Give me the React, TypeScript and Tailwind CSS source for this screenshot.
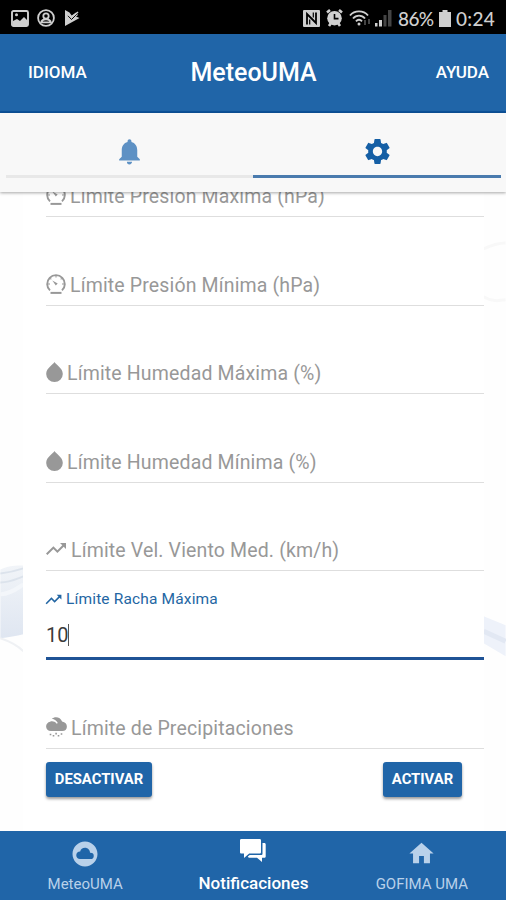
import type { ReactNode } from "react";
import { MdNotifications, MdSettings, MdTrendingUp, MdHome, MdCloudCircle } from "react-icons/md";

function GaugeIcon() {
  return (
    <svg viewBox="0 0 20 20" className="w-5 h-5 shrink-0" fill="none" stroke="currentColor" strokeWidth="1.900">
      <path d="M4 16.400A8.800 8.800 0 1 1 16 16.400" />
      <path d="M4.500 18.900h11" strokeWidth="2" />
      <path d="M1.500 10H4M16 10h2.500M10 1.500V3.600M4.300 4.400l1 1M15.700 4.400l-1 1" strokeWidth="1.100" />
      <path d="M6.300 6.500l5.400 3-1.900 2.100z" fill="currentColor" stroke="none" />
    </svg>
  );
}

function DropIcon() {
  return (
    <svg viewBox="0 0 17 20" className="w-[17px] h-5 shrink-0" fill="currentColor">
      <path d="M8.500 0C9.600 2.600 16.800 5.800 16.800 12A8.300 8 0 0 1 .2 12C.2 5.800 7.400 2.600 8.500 0z" />
    </svg>
  );
}

function RainIcon() {
  return (
    <svg viewBox="0 0 21 20" className="w-[21px] h-5 shrink-0" fill="currentColor">
      <path d="M5.800 1.700C8.400-.7 14.500-.6 16.100 4.600 19.200 5.100 20.900 7.300 20.900 9.700c0 2.600-2 4.400-4.500 4.400H4.900C2.100 14.100.1 12.100.1 9.500c0-2.400 1.700-4.400 4-4.800 1.700-.8 4.800-.5 6.600 2l1.100-.8C10.700 3.800 8.600 1.900 5.800 1.700z" />
      <path d="M3.700 16.700h1.600v1.600H3.700zM9.300 15.800h1.600v1.600H9.300zM14.700 16.200h1.600v1.600h-1.600zM6.700 18h1.600v1.600H6.700zM11.700 18h1.600v1.600h-1.600z" />
    </svg>
  );
}

function ChatIcon() {
  return (
    <svg viewBox="0 0 26 24" className="w-[26px] h-6" fill="currentColor">
      <path d="M1.300 0h18.400c.7 0 1.300.6 1.300 1.300v12c0 .7-.6 1.300-1.300 1.300H9.200L4 19v-4.400H1.300C.6 14.600 0 14 0 13.300v-12C0 .6.600 0 1.300 0z" />
      <path d="M22.500 4h1.900c.7 0 1.300.6 1.300 1.300v12.200c0 .7-.6 1.300-1.300 1.300H22V23l-5-4.200H9.200c-.8 0-1.300-.5-1.300-1.200l1.800-1.500h11.500c.8 0 1.300-.5 1.300-1.300z" />
    </svg>
  );
}

function StatusBar() {
  return (
    <div className="h-[34px] shrink-0 bg-black text-[#cfcfcf] flex items-center justify-between pl-[11px] pr-[11px] pt-0.5">
      <div className="flex items-center gap-2">
        <svg viewBox="0 0 18 17" className="w-[18px] h-[17px]">
          <rect x="1" y="1" width="16" height="15" rx="1.500" fill="none" stroke="currentColor" strokeWidth="1.900" />
          <path d="M2 15V11l4-2 3 2 4-4 4 4v4z" fill="currentColor" />
          <circle cx="5.500" cy="4.800" r="1.500" fill="currentColor" />
        </svg>
        <svg viewBox="0 0 18 18" className="w-[18px] h-[18px]" fill="none" stroke="currentColor" strokeWidth="1.800">
          <circle cx="9" cy="9" r="7.900" />
          <circle cx="9" cy="7" r="2.700" />
          <path d="M4 14c.7-5 9.300-5 10 0M5 13.400h8" />
        </svg>
        <svg viewBox="0 0 15 16" className="w-[15px] h-4 ml-0.5">
          <path d="M0 0l4.500 2.500 2.200 3L11 2.500 13 5l-2 1.500L14.500 8 0 16z" fill="currentColor" />
          <path d="M3 5.800l3.500 3.700L12 4" fill="none" stroke="#000" strokeWidth="1" />
          <path d="M3.500 4.500l3 3L13 2" fill="none" stroke="currentColor" strokeWidth="1.600" />
        </svg>
      </div>
      <div className="flex items-center">
        <svg viewBox="0 0 17 17" className="w-[17px] h-[17px]">
          <rect width="17" height="17" rx="1" fill="currentColor" />
          <path d="M4 14.500V4l9 9V2.500" fill="none" stroke="#000" strokeWidth="1.800" />
          <path d="M6.700 14.500V9.500M10.300 2.500v5" stroke="#000" strokeWidth="1.200" />
        </svg>
        <svg viewBox="0 0 17 18" className="w-[17px] h-[18px] ml-[6px]">
          <path d="M1 3.500l3-2.500M16 3.500L13 1M3 17l2-3M14 17l-2-3" stroke="currentColor" strokeWidth="2.600" />
          <circle cx="8.500" cy="9.200" r="7.300" fill="currentColor" />
          <path d="M8.500 5v4.600h4" fill="none" stroke="#000" strokeWidth="1.600" />
        </svg>
        <svg viewBox="0 0 22 18" className="w-[22px] h-[18px] ml-[6px]" fill="none" stroke="currentColor" strokeWidth="1.900">
          <path d="M1 6.500c4.500-5.500 13.500-5.500 18 0M4 9.500c3.300-3.800 8.700-3.800 12 0M7 12.300c1.700-2 4.300-2 6 0" />
          <circle cx="10" cy="15" r="1.500" fill="currentColor" stroke="none" />
          <path d="M16 11v5M20 10v5" stroke="#444" strokeWidth="2" />
        </svg>
        <svg viewBox="0 0 18 18" className="w-[18px] h-[18px] ml-[3px]" fill="#444">
          <path d="M1 14h2.500v3.500H1zM5 11h3v6.500H5z" fill="currentColor" />
          <path d="M9.500 6h3v11.500h-3zM14 1h3.500v16.500H14z" />
        </svg>
        <span className="font-['Lato'] font-medium text-[19px] leading-none ml-[6px] w-[36px] tracking-[-0.600px] whitespace-nowrap">86%</span>
        <svg viewBox="0 0 12 17" className="w-3 h-[17px] ml-[5px]" fill="currentColor">
          <path d="M3.500 0h5v2H12v15H0V2h3.500z" />
        </svg>
        <span className="font-['Lato'] font-medium text-[19px] leading-none ml-[5px] w-[39px] tracking-[0.300px] whitespace-nowrap">0:24</span>
      </div>
    </div>
  );
}

function Field({ icon, label, spacing = "gap-1" }: { icon: ReactNode; label: string; spacing?: string }) {
  return (
    <div className="h-[88.600px] shrink-0 border-b border-[#dedede] flex items-end pb-[9px] text-[#989898]">
      <div className={`flex items-center ${spacing}`}>
        {icon}
        <span className="text-[19.500px] leading-5 pt-1 tracking-[0.150px] whitespace-nowrap">{label}</span>
      </div>
    </div>
  );
}

// Soft waves that show on both sides of the form
function Background() {
  return (
    <svg viewBox="0 0 506 640" className="absolute inset-0 w-full h-full" fill="none">
      <defs>
        <linearGradient id="wave" x1="0" y1="374" x2="0" y2="447" gradientUnits="userSpaceOnUse">
          <stop offset="0" stopColor="#f1f4f8" />
          <stop offset="1" stopColor="#dfe6f1" />
        </linearGradient>
      </defs>
      <path d="M0 378C8 374 16 374 23 374V443C16 445 8 446 0 447z" fill="url(#wave)" />
      <path d="M0 403C12 402 18 396 23 393" stroke="#f3f6fa" strokeWidth="4" />
      <path d="M0 382C10 381 17 379 23 377M0 391C10 391 17 387 23 385" stroke="#dce3ec" strokeWidth="2" />
      <path d="M0 447C9 450 17 454 23 460" stroke="#eff1f4" strokeWidth="2" />
      <path d="M484 425l22 9v31l-22-13z" fill="#eef2fa" />
      <path d="M484 440l22 10" stroke="#e2e8f3" strokeWidth="5" />
      <path d="M484 57c8-4 15-6 22-6M484 105c8 5 15 4 22 3" stroke="#f8f8f8" strokeWidth="3" />
    </svg>
  );
}

export default function App() {
  return (
    <div className="w-[506px] h-[900px] flex flex-col overflow-hidden bg-white font-['Roboto',sans-serif]">
      <StatusBar />
      <header className="h-[79px] shrink-0 bg-[#2065a8] border-b-2 border-[#0d529a] text-white flex items-center justify-between pl-[28px] pr-[17px]">
        <button className="w-[70px] text-left text-[17px] font-medium">IDIOMA</button>
        <h1 className="text-[25px] font-medium leading-none">MeteoUMA</h1>
        <button className="w-[80px] text-right text-[17px] font-medium">AYUDA</button>
      </header>
      <nav className="h-[79px] shrink-0 bg-[#f8f8f8] pl-[6px] flex relative z-10 shadow-[0_1px_3px_rgba(0,0,0,0.35)]">
        <button className="w-[247px] h-[65px] border-b-3 border-[#e8e8e8] flex items-center justify-center pt-[14px] text-[#5e91c4]">
          <MdNotifications size={31} />
        </button>
        <button className="w-[248px] h-[65px] border-b-3 border-[#4a7bae] flex items-center justify-center pt-[14px] text-[#155fa5]">
          <MdSettings size={31} />
        </button>
      </nav>

      <main className="flex-1 min-h-0 overflow-hidden relative bg-[#fefefe]">
        <Background />
        <form className="relative ml-[23px] w-[461px] h-full bg-white pl-[23px] flex flex-col">
          <div className="-mt-[63.500px] flex flex-col">
            <Field icon={<GaugeIcon />} label="Límite Presión Máxima (hPa)" />
            <Field icon={<GaugeIcon />} label="Límite Presión Mínima (hPa)" />
            <Field icon={<DropIcon />} label="Límite Humedad Máxima (%)" />
            <Field icon={<DropIcon />} label="Límite Humedad Mínima (%)" />
            <Field icon={<MdTrendingUp size={24} className="-ml-[2px]" />} label="Límite Vel. Viento Med. (km/h)" spacing="gap-[3px]" />
            <div className="h-[88.600px] shrink-0 border-b-3 border-[#1f5396] pt-[18px]">
              <label className="flex items-center gap-[3px] text-[#2366a3] leading-5">
                <MdTrendingUp size={19} className="-ml-[2px]" />
                <span className="text-[15.500px] tracking-[0.150px]">Límite Racha Máxima</span>
              </label>
              <div className="flex items-center mt-[14px] text-[20px] leading-6 text-[#3c3c3c]">
                10
                <span className="w-px h-[22px] bg-[#555555]" />
              </div>
            </div>
            <Field icon={<RainIcon />} label="Límite de Precipitaciones" />
          </div>
          <div className="flex justify-between pt-[13px] pr-[22px] text-white text-[14.800px] font-bold">
            <button type="button" className="w-[106px] h-[35px] rounded-[3px] bg-[#2065a8] shadow-[0_2px_3px_rgba(0,0,0,0.4)]">DESACTIVAR</button>
            <button type="button" className="w-[79px] h-[35px] rounded-[3px] bg-[#2065a8] shadow-[0_2px_3px_rgba(0,0,0,0.4)]">ACTIVAR</button>
          </div>
        </form>
      </main>

      <footer className="h-[69px] shrink-0 bg-[#2065a8] grid grid-cols-3 pl-px text-[#b9d1ea]">
        <div className="flex flex-col items-center pt-[8px]">
          <MdCloudCircle size={30} />
          <span className="text-[15px] leading-5 mt-[5px]">MeteoUMA</span>
        </div>
        <div className="flex flex-col items-center pt-[8px] text-white">
          <ChatIcon />
          <span className="text-[17px] leading-5 mt-[10px] font-medium">Notificaciones</span>
        </div>
        <div className="flex flex-col items-center pt-[8px]">
          <MdHome size={29} />
          <span className="text-[15px] leading-5 mt-[6px]">GOFIMA UMA</span>
        </div>
      </footer>
    </div>
  );
}
